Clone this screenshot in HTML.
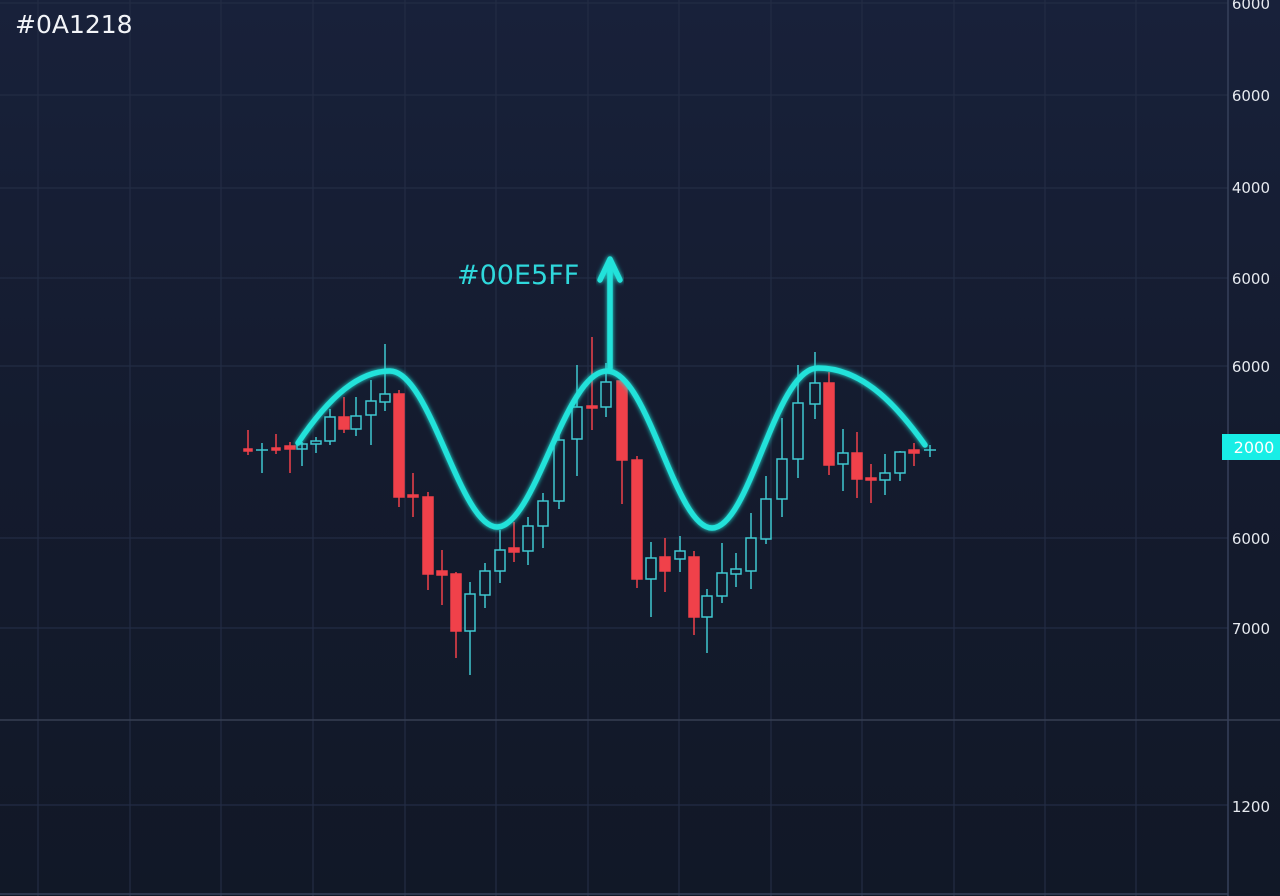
<!DOCTYPE html>
<html><head><meta charset="utf-8"><style>
html,body{margin:0;padding:0;width:1280px;height:896px;overflow:hidden;background:#131b2d}
svg{display:block}
text{font-family:"DejaVu Sans","Liberation Sans",sans-serif}
</style></head><body>
<svg width="1280" height="896" viewBox="0 0 1280 896" xmlns="http://www.w3.org/2000/svg">
<defs>
<linearGradient id="bg" x1="0" y1="0" x2="0" y2="1">
<stop offset="0" stop-color="#18213a"/><stop offset="0.5" stop-color="#141b2e"/><stop offset="1" stop-color="#111827"/>
</linearGradient>
<filter id="glow" x="-20%" y="-50%" width="140%" height="200%"><feGaussianBlur stdDeviation="2.5" result="b"/><feMerge><feMergeNode in="b"/><feMergeNode in="SourceGraphic"/></feMerge></filter>
</defs>
<rect width="1280" height="896" fill="url(#bg)"/>
<g stroke="#232c44" stroke-width="1.2">
<line x1="38" y1="0" x2="38" y2="896"/><line x1="130" y1="0" x2="130" y2="896"/><line x1="221" y1="0" x2="221" y2="896"/><line x1="313" y1="0" x2="313" y2="896"/><line x1="405" y1="0" x2="405" y2="896"/><line x1="496" y1="0" x2="496" y2="896"/><line x1="588" y1="0" x2="588" y2="896"/><line x1="679" y1="0" x2="679" y2="896"/><line x1="771" y1="0" x2="771" y2="896"/><line x1="862" y1="0" x2="862" y2="896"/><line x1="954" y1="0" x2="954" y2="896"/><line x1="1045" y1="0" x2="1045" y2="896"/><line x1="1136" y1="0" x2="1136" y2="896"/>
<line x1="0" y1="3" x2="1228" y2="3"/><line x1="0" y1="95" x2="1228" y2="95"/><line x1="0" y1="188" x2="1228" y2="188"/><line x1="0" y1="278" x2="1228" y2="278"/><line x1="0" y1="366" x2="1228" y2="366"/><line x1="0" y1="538" x2="1228" y2="538"/><line x1="0" y1="628" x2="1228" y2="628"/><line x1="0" y1="805" x2="1228" y2="805"/>
</g>
<line x1="0" y1="720" x2="1280" y2="720" stroke="#363f52" stroke-width="1.5"/>
<line x1="1228" y1="0" x2="1228" y2="896" stroke="#36405a" stroke-width="1.5"/>
<line x1="0" y1="894" x2="1228" y2="894" stroke="#36405a" stroke-width="1.5"/>
<g fill="#e6e9ef" font-size="15" text-anchor="end">
<text x="1270" y="9">6000</text><text x="1270" y="101">6000</text><text x="1270" y="193">4000</text><text x="1270" y="284">6000</text><text x="1270" y="372">6000</text><text x="1270" y="544">6000</text><text x="1270" y="634">7000</text><text x="1270" y="812">1200</text>
</g>
<text x="15" y="33" fill="#f2f4f8" font-size="25">#0A1218</text>
<g stroke-width="1.5">
<g stroke="#f0414a" fill="#f0414a">
<line x1="248" y1="430" x2="248" y2="455"/><rect x="244" y="449" width="8" height="2"/>
<line x1="276" y1="434" x2="276" y2="454"/><rect x="272" y="448" width="8" height="2"/>
<line x1="290" y1="442" x2="290" y2="473"/><rect x="285" y="446" width="10" height="3"/>
<line x1="344" y1="397" x2="344" y2="433"/><rect x="339" y="417" width="10" height="12"/>
<line x1="399" y1="390" x2="399" y2="507"/><rect x="394" y="394" width="10" height="103"/>
<line x1="413" y1="473" x2="413" y2="517"/><rect x="408" y="495" width="10" height="2"/>
<line x1="428" y1="492" x2="428" y2="590"/><rect x="423" y="497" width="10" height="77"/>
<line x1="442" y1="550" x2="442" y2="605"/><rect x="437" y="571" width="10" height="4"/>
<line x1="456" y1="572" x2="456" y2="658"/><rect x="451" y="574" width="10" height="57"/>
<line x1="514" y1="522" x2="514" y2="562"/><rect x="509" y="548" width="10" height="4"/>
<line x1="592" y1="337" x2="592" y2="430"/><rect x="587" y="406" width="10" height="2"/>
<line x1="622" y1="380" x2="622" y2="504"/><rect x="617" y="381" width="10" height="79"/>
<line x1="637" y1="456" x2="637" y2="588"/><rect x="632" y="460" width="10" height="119"/>
<line x1="665" y1="538" x2="665" y2="592"/><rect x="660" y="557" width="10" height="14"/>
<line x1="694" y1="551" x2="694" y2="635"/><rect x="689" y="557" width="10" height="60"/>
<line x1="829" y1="372" x2="829" y2="475"/><rect x="824" y="383" width="10" height="82"/>
<line x1="857" y1="432" x2="857" y2="498"/><rect x="852" y="453" width="10" height="26"/>
<line x1="871" y1="464" x2="871" y2="503"/><rect x="866" y="478" width="10" height="2"/>
<line x1="914" y1="443" x2="914" y2="466"/><rect x="909" y="450" width="10" height="3"/>
</g>
<g stroke="#3fc8d0" fill="none">
<line x1="262" y1="443" x2="262" y2="473"/><line x1="256" y1="450" x2="268" y2="450"/>
<line x1="302" y1="442" x2="302" y2="466"/><rect x="297" y="444" width="10" height="5"/>
<line x1="316" y1="437" x2="316" y2="441"/><line x1="316" y1="444" x2="316" y2="453"/><rect x="311" y="441" width="10" height="3"/>
<line x1="330" y1="409" x2="330" y2="417"/><line x1="330" y1="441" x2="330" y2="445"/><rect x="325" y="417" width="10" height="24"/>
<line x1="356" y1="397" x2="356" y2="416"/><line x1="356" y1="429" x2="356" y2="436"/><rect x="351" y="416" width="10" height="13"/>
<line x1="371" y1="380" x2="371" y2="401"/><line x1="371" y1="415" x2="371" y2="445"/><rect x="366" y="401" width="10" height="14"/>
<line x1="385" y1="344" x2="385" y2="394"/><line x1="385" y1="402" x2="385" y2="411"/><rect x="380" y="394" width="10" height="8"/>
<line x1="470" y1="582" x2="470" y2="594"/><line x1="470" y1="631" x2="470" y2="675"/><rect x="465" y="594" width="10" height="37"/>
<line x1="485" y1="563" x2="485" y2="571"/><line x1="485" y1="595" x2="485" y2="608"/><rect x="480" y="571" width="10" height="24"/>
<line x1="500" y1="530" x2="500" y2="550"/><line x1="500" y1="571" x2="500" y2="583"/><rect x="495" y="550" width="10" height="21"/>
<line x1="528" y1="517" x2="528" y2="526"/><line x1="528" y1="551" x2="528" y2="565"/><rect x="523" y="526" width="10" height="25"/>
<line x1="543" y1="493" x2="543" y2="501"/><line x1="543" y1="526" x2="543" y2="548"/><rect x="538" y="501" width="10" height="25"/>
<line x1="559" y1="430" x2="559" y2="440"/><line x1="559" y1="501" x2="559" y2="509"/><rect x="554" y="440" width="10" height="61"/>
<line x1="577" y1="365" x2="577" y2="407"/><line x1="577" y1="439" x2="577" y2="476"/><rect x="572" y="407" width="10" height="32"/>
<line x1="606" y1="363" x2="606" y2="382"/><line x1="606" y1="407" x2="606" y2="417"/><rect x="601" y="382" width="10" height="25"/>
<line x1="651" y1="542" x2="651" y2="558"/><line x1="651" y1="579" x2="651" y2="617"/><rect x="646" y="558" width="10" height="21"/>
<line x1="680" y1="536" x2="680" y2="551"/><line x1="680" y1="559" x2="680" y2="572"/><rect x="675" y="551" width="10" height="8"/>
<line x1="707" y1="589" x2="707" y2="596"/><line x1="707" y1="617" x2="707" y2="653"/><rect x="702" y="596" width="10" height="21"/>
<line x1="722" y1="543" x2="722" y2="573"/><line x1="722" y1="596" x2="722" y2="603"/><rect x="717" y="573" width="10" height="23"/>
<line x1="736" y1="553" x2="736" y2="569"/><line x1="736" y1="574" x2="736" y2="587"/><rect x="731" y="569" width="10" height="5"/>
<line x1="751" y1="513" x2="751" y2="538"/><line x1="751" y1="571" x2="751" y2="589"/><rect x="746" y="538" width="10" height="33"/>
<line x1="766" y1="476" x2="766" y2="499"/><line x1="766" y1="539" x2="766" y2="544"/><rect x="761" y="499" width="10" height="40"/>
<line x1="782" y1="418" x2="782" y2="459"/><line x1="782" y1="499" x2="782" y2="517"/><rect x="777" y="459" width="10" height="40"/>
<line x1="798" y1="365" x2="798" y2="403"/><line x1="798" y1="459" x2="798" y2="478"/><rect x="793" y="403" width="10" height="56"/>
<line x1="815" y1="352" x2="815" y2="383"/><line x1="815" y1="404" x2="815" y2="419"/><rect x="810" y="383" width="10" height="21"/>
<line x1="843" y1="429" x2="843" y2="453"/><line x1="843" y1="464" x2="843" y2="491"/><rect x="838" y="453" width="10" height="11"/>
<line x1="885" y1="454" x2="885" y2="473"/><line x1="885" y1="480" x2="885" y2="495"/><rect x="880" y="473" width="10" height="7"/>
<line x1="900" y1="451" x2="900" y2="452"/><line x1="900" y1="473" x2="900" y2="481"/><rect x="895" y="452" width="10" height="21"/>
<line x1="930" y1="445" x2="930" y2="457"/><line x1="924" y1="450" x2="936" y2="450"/>
</g>
</g>
<line x1="0" y1="447" x2="1224" y2="447" stroke="#2fe0e0" stroke-width="2.5" filter="url(#glow)"/>
<path d="M298,443 C330,395 360,371 390,371 C430,371 460,527 497,527 C535,527 565,371 607,371 C648,371 675,528 712,528 C750,528 775,368 818,368 C865,368 900,410 925,445" fill="none" stroke="#22e2da" stroke-width="5.5" stroke-linecap="round" filter="url(#glow)"/>
<g stroke="#22e2da" stroke-width="5.5" stroke-linecap="round" stroke-linejoin="round" fill="none" filter="url(#glow)">
<line x1="610" y1="368" x2="610" y2="260"/><polyline points="600,280 610,259 620,280"/>
</g>
<text x="457" y="284" fill="#2fd8dc" font-size="27">#00E5FF</text>
<rect x="1222" y="434" width="58" height="26" fill="#18eee6"/>
<text x="1254" y="453" fill="#ffffff" font-size="16" text-anchor="middle">2000</text>
</svg>
</body></html>
